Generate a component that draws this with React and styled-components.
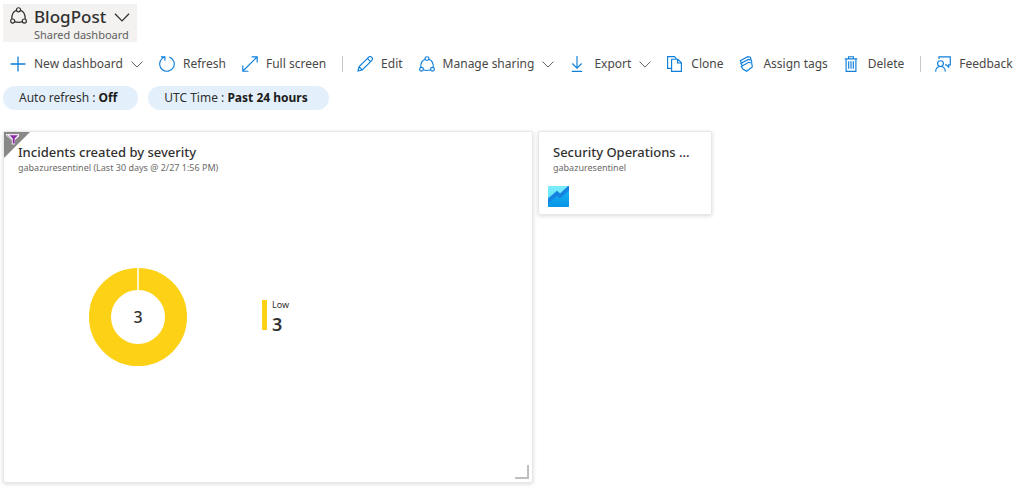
import React, { Fragment } from 'react';
import styled, { createGlobalStyle } from "styled-components";

const GlobalStyle = createGlobalStyle`
    * { box-sizing: border-box; }
    body {
        margin: 0;
        background: #fff;
        color: #323130;
        font-family: "Noto Sans", "Open Sans", sans-serif;
        font-size: 12px;
        line-height: 18px;
    }
    h1, h2, p { margin: 0; }
    svg { display: block; flex: none; }
`;

const Page = styled.div`
    padding: 4px 3px 20px;
`;

const ButtonTag = styled.button`
    padding: 0;
    border: 0;
    background: none;
    color: inherit;
    font: inherit;
    white-space: nowrap;
    cursor: pointer;
`;

// Dashboard title
const TitleButton = styled(ButtonTag)`
    display: flex;
    align-items: flex-start;
    gap: 7px;
    height: 38px;
    padding: 3px 7px 0 7px;
    background: #f3f2f1;
    text-align: left;
`;

const TitleRow = styled.div`
    display: flex;
    align-items: center;
    gap: 8px;
`;

const TitleText = styled.h1`
    font-size: 17px;
    line-height: 20px;
    font-weight: 500;
`;

const TitleSub = styled.p`
    font-size: 11px;
    line-height: 15px;
    color: #605e5c;
`;

// Command bar
const Toolbar = styled.div`
    display: flex;
    align-items: center;
    height: 44px;
    padding-left: 7px;
    white-space: nowrap;
`;

const Command = styled(ButtonTag)`
    display: flex;
    flex: none;
    align-items: center;
    gap: 8px;
    color: #494847;

    & + * { margin-left: 16px; }
`;

const Separator = styled.span`
    flex: none;
    width: 1px;
    height: 16px;
    margin-right: 14px;
    background: #c8c6c4;
`;

// Filter pills
const Filters = styled.div`
    display: flex;
    gap: 10px;
`;

const Pill = styled(ButtonTag)`
    height: 24px;
    padding: 0 21px 0 16px;
    border-radius: 12px;
    background: #e3f0fb;

    b { color: #1b1a19; font-weight: 700; }
`;

// Tiles
const Board = styled.main`
    display: grid;
    grid-template-columns: minmax(0, 530px) 174px;
    align-items: start;
    gap: 5px;
    margin-top: 21px;
`;

const Tile = styled.section`
    position: relative;
    min-height: ${(props) => (props.$large ? 352 : 84)}px;
    padding: 11px 14px 7px;
    border: 1px solid #e8e8e8;
    border-radius: 2px;
    background: #fff;
    box-shadow: 0 1px 4px rgba(0, 0, 0, 0.15);
`;

const TileTitle = styled.h2`
    overflow: hidden;
    font-size: 13px;
    line-height: 18px;
    font-weight: 500;
    text-overflow: ellipsis;
    white-space: nowrap;
`;

const TileSub = styled.p`
    font-size: 9px;
    line-height: 14px;
    color: #6c6a68;
`;

const FilterCorner = styled.svg`
    position: absolute;
    top: 0;
    left: 0;
`;

const ResizeCorner = styled.span`
    position: absolute;
    right: 3px;
    bottom: 3px;
    width: 14px;
    height: 14px;
    border: solid #bebebe;
    border-width: 0 2px 2px 0;
`;

const TileLink = styled.a`
    display: block;
    width: fit-content;
    margin: 11px 0 0 -5px;
`;

const ChartArea = styled.div`
    display: flex;
    align-items: center;
    gap: 75px;
    padding: 93px 0 0 71px;
`;

const Legend = styled.div`
    height: 30px;
    margin-top: -4px;
    border-left: 5px solid #fcd116;
    padding-left: 5px;
`;

const LegendName = styled.p`
    font-size: 9px;
    line-height: 10px;
`;

const LegendValue = styled.p`
    margin-top: 4px;
    font-size: 18px;
    line-height: 20px;
    font-weight: 600;
`;

const Svg = ({ children, color = "#0f7fdb", size = 16 }) => (
    <svg width={size} height={size} viewBox="0 0 16 16" fill="none" stroke={color} strokeWidth="1.15" aria-hidden="true">
        {children}
    </svg>
);

const SharePaths = () => (
    <Fragment>
        <circle cx="8" cy="2.6" r="1.9" />
        <circle cx="2.5" cy="13.2" r="1.9" />
        <circle cx="13.5" cy="13.2" r="1.9" />
        <path d="M6.1 3.2C3.3 4.2 1.6 7.4 1.7 11.4M9.9 3.2c2.8 1 4.5 4.2 4.4 8.2M4.4 13.8c2.3.9 4.9.9 7.2 0" />
    </Fragment>
);

const Chevron = ({ width = 12, color = "#605e5c" }) => (
    <svg width={width} height={width / 2 + 1} viewBox="0 0 12 7" fill="none" stroke={color} strokeWidth="1" aria-hidden="true">
        <path d="M.5.6 6 6.1 11.5.6" />
    </svg>
);

const icons = {
    add: <path d="M8 .5v15M.5 8h15" strokeWidth="1.3" />,
    refresh: <path d="M10.4 1.1A7.3 7.3 0 1 1 3 2.6L5.6.8M1.9.8h4v3.9" />,
    full: <path d="M1 15 15 1M9.6.8h5.6v5.6M.8 9.6v5.6h5.6" />,
    edit: <path d="M1 15 2 10.8 11.7 1.1a1.9 1.9 0 0 1 2.8 0l.4.4a1.9 1.9 0 0 1 0 2.8L5.2 14ZM2 10.8 5.2 14M10.4 2.4l3.2 3.2" />,
    share: <SharePaths />,
    export: <path d="M7 0v12M2.4 7.5 7 12.1l4.6-4.6M1.8 15.3h10.4" />,
    clone: (
        <Fragment>
            <path d="M4.6 12.4H.6V.6h6.8l2.1 2.2" />
            <path d="M4.6 3.2h6.2l3.6 3.6v8.6H4.6ZM10.6 3.4v3.6h3.6" />
        </Fragment>
    ),
    tags: (
        <Fragment>
            <path d="M2.6 6.9 1.2 4.7 8.8.7l2.6.6.6 2" />
            <path d="M3.6 10 1.8 7.4l7.6-4 2.9.7.5 2" />
            <path d="m3.9 13-1.6-2.6 7.4-4.1 3 .7.6 4-5.7 4.3Z" />
        </Fragment>
    ),
    trash: (
        <Fragment>
            <path d="M.8 2.8h12.4M4.6 2.8V.7h4.8v2.1M2.1 3v12.3h9.8V3" />
            <path d="M4.7 5.2v7.6M7 5.2v7.6M9.3 5.2v7.6" />
        </Fragment>
    ),
    feedback: (
        <Fragment>
            <circle cx="5.5" cy="7.6" r="2.9" />
            <path d="M.6 15.6c.2-3.1 2-5.1 4.9-5.1s4.7 2 4.9 5.1M4 3V.8h11.3v8h-1.6v2.4l-2.4-2.4h-1.2" />
        </Fragment>
    ),
};

const commands = [
    { icon: "add", label: "New dashboard", menu: true },
    { icon: "refresh", label: "Refresh" },
    { icon: "full", label: "Full screen", last: true },
    { icon: "edit", label: "Edit" },
    { icon: "share", label: "Manage sharing", menu: true },
    { icon: "export", label: "Export", menu: true },
    { icon: "clone", label: "Clone" },
    { icon: "tags", label: "Assign tags" },
    { icon: "trash", label: "Delete", last: true },
    { icon: "feedback", label: "Feedback" },
];

function IncidentsTile() {
    return (
        <Tile $large>
            <FilterCorner width="26" height="26" viewBox="0 0 26 26" aria-hidden="true">
                <path d="M0 0h26L0 26Z" fill="#8a8886" />
                <path d="M2 2h13v2.5l-4 3.6v4.4H7.6V8.6L2 3.6Z" fill="#eee4f2" />
                <path d="M5.6 3.2h8.2l-3.2 3.4v4.8H8.8V6.6Z" fill="#8a2da5" />
                <path d="m3 3.2 4.2 4.4v3.2" fill="none" stroke="#8a8886" strokeWidth=".8" />
            </FilterCorner>
            <TileTitle>Incidents created by severity</TileTitle>
            <TileSub>gabazuresentinel (Last 30 days @ 2/27 1:56 PM)</TileSub>
            <ChartArea>
                <svg width="98" height="98" viewBox="0 0 98 98" role="img" aria-label="Low: 3">
                    <circle cx="49" cy="49" r="38" fill="none" stroke="#fcd116" strokeWidth="22" />
                    <path d="M49 0v23" stroke="#fff" strokeWidth="1.5" />
                    <text x="49" y="55" textAnchor="middle" fontSize="16" fontWeight="500" fill="#323130">3</text>
                </svg>
                <Legend>
                    <LegendName>Low</LegendName>
                    <LegendValue>3</LegendValue>
                </Legend>
            </ChartArea>
            <ResizeCorner />
        </Tile>
    );
}

function WorkbookTile() {
    return (
        <Tile>
            <TileTitle>Security Operations ...</TileTitle>
            <TileSub>gabazuresentinel</TileSub>
            <TileLink href="#workbook" aria-label="Open workbook">
                <svg width="21" height="21" viewBox="0 0 21 21" aria-hidden="true">
                    <defs>
                        <linearGradient id="sky" x1="0" y1="0" x2="0" y2="1">
                            <stop offset="0" stopColor="#7cecfb" />
                            <stop offset="1" stopColor="#50ddf5" />
                        </linearGradient>
                        <linearGradient id="sea" x1="0" y1="0" x2="0" y2="1">
                            <stop offset="0" stopColor="#18b4f2" />
                            <stop offset="1" stopColor="#0794e6" />
                        </linearGradient>
                    </defs>
                    <rect width="21" height="21" rx="1" fill="url(#sky)" />
                    <path d="M0 16 9 8l3 2.5 9-8V20a1 1 0 0 1-1 1H1a1 1 0 0 1-1-1Z" fill="url(#sea)" />
                    <path d="M0 12.5 9 4.8l3 2.8L20 0h1v4.6l-9 8L9 10 0 17.6Z" fill="#1683e2" />
                </svg>
            </TileLink>
        </Tile>
    );
}

function App() {
    return (
        <Fragment>
            <GlobalStyle />
            <Page>
                <TitleButton type="button">
                    <Svg color="#323130" size={17}><SharePaths /></Svg>
                    <div>
                        <TitleRow>
                            <TitleText>BlogPost</TitleText>
                            <Chevron width={16} color="#323130" />
                        </TitleRow>
                        <TitleSub>Shared dashboard</TitleSub>
                    </div>
                </TitleButton>
                <Toolbar role="toolbar">
                    {commands.map((item) => (
                        <Fragment key={item.label}>
                            <Command type="button">
                                <Svg>{icons[item.icon]}</Svg>
                                {item.label}
                                {item.menu && <Chevron />}
                            </Command>
                            {item.last && <Separator />}
                        </Fragment>
                    ))}
                </Toolbar>
                <Filters>
                    <Pill type="button">Auto refresh : <b>Off</b></Pill>
                    <Pill type="button">UTC Time : <b>Past 24 hours</b></Pill>
                </Filters>
                <Board>
                    <IncidentsTile />
                    <WorkbookTile />
                </Board>
            </Page>
        </Fragment>
    );
}

export default App;
